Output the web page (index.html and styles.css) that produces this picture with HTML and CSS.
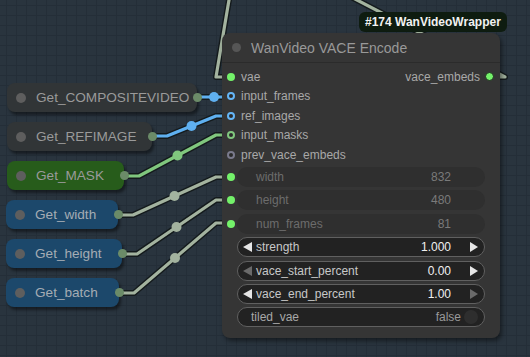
FILE: index.html
```html
<!DOCTYPE html>
<html lang="en">
<head>
    <meta charset="UTF-8">
    <title>WanVideo VACE Encode</title>
    <link rel="stylesheet" href="styles.css">
</head>
<body>

<div class="canvas">
    <!-- links between nodes -->
    <svg class="wires" width="530" height="357" viewBox="0 0 530 357">
        <g class="wire-shadow">
            <path d="M490 77 L505 77 L330 -14"/>
            <path d="M231 -12 L216 77 L231 77"/>
            <path d="M197 97 L231 97"/>
            <path d="M152 136 L167 136 L216 116 L231 116"/>
            <path d="M124 176 L139 176 L216 135 L231 135"/>
            <path d="M118 215 L133 215 L216 177 L231 177"/>
            <path d="M122 254 L137 254 L216 200 L231 200"/>
            <path d="M119 293 L134 293 L216 223 L231 223"/>
        </g>
        <g class="wire-int">
            <path d="M490 77 L505 77 L330 -14"/>
            <path d="M231 -12 L216 77 L231 77"/>
            <path d="M118 215 L133 215 L216 177 L231 177"/>
            <path d="M122 254 L137 254 L216 200 L231 200"/>
            <path d="M119 293 L134 293 L216 223 L231 223"/>
            <circle cx="174.5" cy="196" r="5"/>
            <circle cx="176.5" cy="227" r="5"/>
            <circle cx="175" cy="258" r="5"/>
        </g>
        <g class="wire-image">
            <path d="M197 97 L231 97"/>
            <path d="M152 136 L167 136 L216 116 L231 116"/>
            <circle cx="214" cy="97" r="5"/>
            <circle cx="191.5" cy="126" r="5"/>
        </g>
        <g class="wire-mask">
            <path d="M124 176 L139 176 L216 135 L231 135"/>
            <circle cx="177.5" cy="155.5" r="5"/>
        </g>
    </svg>

    <!-- collapsed getter nodes -->
    <div class="getter get-composite"><span class="dot"></span>Get_COMPOSITEVIDEO<span class="out"></span></div>
    <div class="getter get-refimage"><span class="dot"></span>Get_REFIMAGE<span class="out"></span></div>
    <div class="getter green get-mask"><span class="dot"></span>Get_MASK<span class="out"></span></div>
    <div class="getter blue get-width"><span class="dot"></span>Get_width<span class="out"></span></div>
    <div class="getter blue get-height"><span class="dot"></span>Get_height<span class="out"></span></div>
    <div class="getter blue get-batch"><span class="dot"></span>Get_batch<span class="out"></span></div>

    <div class="badge">#174 WanVideoWrapper</div>

    <div class="node vace">
        <div class="node-title"><span class="dot"></span>WanVideo VACE Encode</div>

        <div class="slots">
            <div class="slot-row">
                <div class="slot"><i class="pin fill"></i>vae</div>
                <div class="slot out">vace_embeds<i class="pin fill ring"></i></div>
            </div>
            <div class="slot-row">
                <div class="slot"><i class="pin hollow blue-pin"></i>input_frames</div>
            </div>
            <div class="slot-row">
                <div class="slot"><i class="pin hollow blue-pin"></i>ref_images</div>
            </div>
            <div class="slot-row">
                <div class="slot"><i class="pin hollow green-pin"></i>input_masks</div>
            </div>
            <div class="slot-row">
                <div class="slot"><i class="pin hollow grey-pin"></i>prev_vace_embeds</div>
            </div>
        </div>

        <div class="widgets">
            <div class="widget-row">
                <i class="pin fill"></i>
                <div class="widget converted"><span class="label">width</span><span class="value">832</span></div>
            </div>
            <div class="widget-row">
                <i class="pin fill"></i>
                <div class="widget converted"><span class="label">height</span><span class="value">480</span></div>
            </div>
            <div class="widget-row">
                <i class="pin fill"></i>
                <div class="widget converted"><span class="label">num_frames</span><span class="value">81</span></div>
            </div>
            <div class="widget-row">
                <i></i>
                <div class="widget number">
                    <span class="arrow left"></span>
                    <span class="label">strength</span>
                    <span class="value">1.000</span>
                    <span class="arrow right"></span>
                </div>
            </div>
            <div class="widget-row">
                <i></i>
                <div class="widget number">
                    <span class="arrow left off"></span>
                    <span class="label">vace_start_percent</span>
                    <span class="value">0.00</span>
                    <span class="arrow right"></span>
                </div>
            </div>
            <div class="widget-row">
                <i></i>
                <div class="widget number">
                    <span class="arrow left"></span>
                    <span class="label">vace_end_percent</span>
                    <span class="value">1.00</span>
                    <span class="arrow right off"></span>
                </div>
            </div>
            <div class="widget-row">
                <i></i>
                <div class="widget toggle">
                    <span class="label">tiled_vae</span>
                    <span class="value">false</span>
                    <span class="knob"></span>
                </div>
            </div>
        </div>
    </div>
</div>

</body>
</html>
```

FILE: styles.css
```css
body {
    margin: 0;
    padding: 0;
    font-family: "Liberation Sans", Arial, sans-serif;
    background-color: #29343e;
}
.canvas {
    position: relative;
    width: 530px;
    height: 357px;
    overflow: hidden;
    background-color: #29343e;
    background-image:
        linear-gradient(#242e38 1px, transparent 1px),
        linear-gradient(90deg, #242e38 1px, transparent 1px);
    background-size: 10px 10px;
    background-position: 6px 5px;
}

/* wires */
.wires {
    position: absolute;
    left: 0;
    top: 0;
}
.wires path {
    fill: none;
    stroke-linejoin: round;
}
.wire-shadow path {
    stroke: #141a1c;
    stroke-width: 6;
}
.wire-int path {
    stroke: #a3b39f;
    stroke-width: 3.2;
}
.wire-int circle {
    fill: #a3b39f;
}
.wire-image path {
    stroke: #5fb0f0;
    stroke-width: 3.2;
}
.wire-image circle {
    fill: #5fb0f0;
}
.wire-mask path {
    stroke: #80c77e;
    stroke-width: 3.2;
}
.wire-mask circle {
    fill: #80c77e;
}

/* collapsed getter nodes */
.getter {
    position: absolute;
    left: 7px;
    height: 29px;
    box-sizing: border-box;
    display: flex;
    align-items: center;
    gap: 10px;
    padding-left: 9px;
    background-color: #313537;
    border-radius: 8px;
    box-shadow: 2px 3px 3px rgba(0, 0, 0, 0.45);
    color: #9a9a9a;
    font-size: 13.6px;
    white-space: nowrap;
}
.getter .dot {
    width: 10px;
    height: 10px;
    border-radius: 50%;
    background-color: #5e5e5e;
}
.getter .out {
    position: absolute;
    right: -4.5px;
    top: 10px;
    width: 9px;
    height: 9px;
    border-radius: 50%;
    background-color: #6b8b68;
}
.getter.green {
    background-color: #275c1b;
}
.getter.blue {
    background-color: #1c486b;
    color: #a4acb4;
}
.get-composite { top: 83px; width: 190px; }
.get-refimage { top: 122px; width: 145px; }
.get-mask { top: 161px; width: 117px; }
.get-width { top: 200px; left: 6px; width: 112px; }
.get-height { top: 239px; left: 6px; width: 116px; }
.get-batch { top: 278px; left: 6px; width: 113px; }

/* badge over the node */
.badge {
    position: absolute;
    left: 359px;
    top: 12px;
    height: 20px;
    padding: 0 6px;
    display: flex;
    align-items: center;
    background-color: #0e1c10;
    border-radius: 6px;
    color: #f2f2f2;
    font-size: 12px;
    font-weight: bold;
}

/* main node */
.node {
    position: absolute;
    background-color: #353535;
    border-radius: 8px;
    box-shadow: 2px 3px 4px rgba(0, 0, 0, 0.45);
}
.vace {
    left: 222px;
    top: 33px;
    width: 278px;
    height: 305px;
}
.node-title {
    height: 30px;
    box-sizing: border-box;
    display: flex;
    align-items: center;
    gap: 10px;
    padding-left: 10px;
    border-bottom: 1px solid #2b2b2b;
    color: #999;
    font-size: 14px;
}
.node-title .dot {
    width: 9px;
    height: 9px;
    border-radius: 50%;
    background-color: #565656;
}
.slots {
    padding-top: 4px;
}
.slot-row {
    height: 19.5px;
    display: flex;
    justify-content: space-between;
    align-items: center;
    padding: 0 6px 0 5px;
}
.slot {
    display: flex;
    align-items: center;
    gap: 6px;
    color: #a8a8a8;
    font-size: 12px;
}
.slot.out {
    gap: 5px;
}
.pin {
    display: block;
    width: 8px;
    height: 8px;
    box-sizing: border-box;
    border-radius: 50%;
}
.pin.fill {
    background-color: #74f26a;
}
.pin.ring {
    width: 9px;
    height: 9px;
    border: 1px solid #1f2a1f;
}
.pin.hollow {
    border-width: 2.5px;
    border-style: solid;
    background-color: #2a2a2a;
}
.pin.blue-pin { border-color: #64b5f6; }
.pin.green-pin { border-color: #80c77e; }
.pin.grey-pin { border-color: #7a7a8c; }

/* widgets */
.widgets {
    padding-top: 2.5px;
    display: flex;
    flex-direction: column;
    gap: 3.4px;
}
.widget-row {
    display: grid;
    grid-template-columns: 10px 1fr;
    align-items: center;
    padding: 0 15px 0 5px;
}
.widget {
    height: 20px;
    box-sizing: border-box;
    display: flex;
    align-items: center;
    border-radius: 10px;
    font-size: 12px;
    white-space: nowrap;
}
.widget .label {
    flex: 1;
}
.widget.converted {
    background-color: #2f2f2f;
    padding: 0 34px 0 19px;
    color: #6c6c6c;
}
.widget.converted .value {
    color: #7a7a7a;
}
.widget.number,
.widget.toggle {
    background-color: #222;
    border: 1px solid #606060;
}
.widget.number {
    padding: 0 6px 0 5px;
    color: #c8c8c8;
}
.widget.number .label {
    margin-left: 4px;
}
.widget.number .value {
    color: #f0f0f0;
    margin-right: 19px;
}
.arrow {
    width: 0;
    height: 0;
    border-top: 5px solid transparent;
    border-bottom: 5px solid transparent;
}
.arrow.left {
    border-right: 9px solid #e6e6e6;
}
.arrow.right {
    border-left: 8px solid #e6e6e6;
}
.arrow.left.off {
    border-right-color: #6a6a6a;
}
.arrow.right.off {
    border-left-color: #6a6a6a;
}
.widget.toggle {
    padding: 0 6px 0 13px;
    color: #a8a8a8;
}
.widget.toggle .value {
    color: #999;
    margin-right: 3px;
}
.knob {
    width: 14px;
    height: 14px;
    border-radius: 50%;
    background-color: #2e2e2e;
}
```
